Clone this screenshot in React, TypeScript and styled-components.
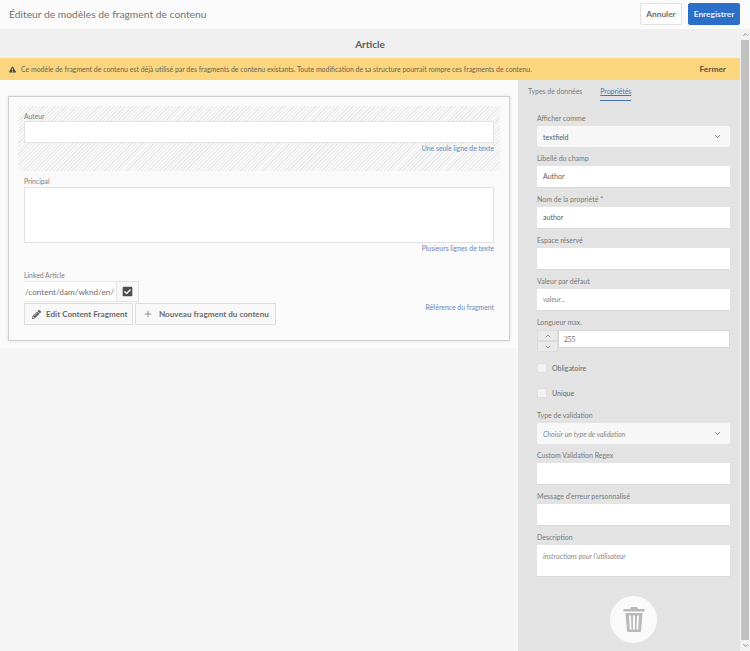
import React from 'react';
import styled, { createGlobalStyle } from 'styled-components';
import { ChevronDown, ChevronUp, Plus } from 'lucide-react';
import { FaCheckSquare, FaExclamationTriangle, FaPencilAlt } from 'react-icons/fa';

const GlobalStyle = createGlobalStyle`
  html, body {
    margin: 0;
    padding: 0;
    height: 100%;
    overflow: hidden;
    background: #f5f5f5;
    font-family: 'Lato', 'Open Sans', sans-serif;
    color: #6e6e6e;
  }
  * {
    box-sizing: border-box;
  }
`;

const Page = styled.div`
  display: flex;
  flex-direction: column;
  width: 750px;
  height: 651px;
  overflow: hidden;
`;

const TopBar = styled.header`
  display: flex;
  align-items: center;
  justify-content: space-between;
  height: 29px;
  flex-shrink: 0;
  padding: 0 10px 1px 9px;
  background: #fafafa;
`;

const Title = styled.div`
  font-size: 10.3px;
  color: #747474;
`;

const Actions = styled.div`
  display: flex;
  gap: 6px;
`;

const ActionButton = styled.button<{ $primary?: boolean }>`
  height: 22px;
  width: ${(p) => (p.$primary ? '52px' : '42px')};
  padding: 0;
  font-family: inherit;
  font-size: 8.3px;
  font-weight: 700;
  border-radius: 2px;
  border: 1px solid ${(p) => (p.$primary ? '#2b6fc9' : '#e1e1e1')};
  background: ${(p) => (p.$primary ? '#2b6fc9' : '#fdfdfd')};
  color: ${(p) => (p.$primary ? '#e8f0fb' : '#6e6e6e')};
`;

const Body = styled.div`
  display: flex;
  flex: 1;
  min-height: 0;
`;

const Workspace = styled.div`
  display: flex;
  flex-direction: column;
  width: 740px;
  flex-shrink: 0;
`;

const Scrollbar = styled.div`
  display: flex;
  flex-direction: column;
  align-items: center;
  flex: 1;
  background: #f1f1f1;
`;

const ScrollArrow = styled.div`
  display: flex;
  align-items: center;
  justify-content: center;
  height: 11px;
  flex-shrink: 0;
  color: #777;
`;

const ScrollThumb = styled.div`
  flex: 1;
  width: 8px;
  background: #c1c1c1;
`;

const ArticleBar = styled.div`
  display: flex;
  align-items: center;
  justify-content: center;
  height: 29px;
  flex-shrink: 0;
  background: #f0f0f0;
  font-size: 10px;
  font-weight: 700;
  color: #5c5c5c;
`;

const Alert = styled.div`
  display: flex;
  align-items: center;
  height: 22px;
  flex-shrink: 0;
  padding: 0 14px 0 9px;
  background: #fcd57f;
  font-size: 6.93px;
  color: #6a6350;
  svg {
    width: 7px;
    height: 7px;
    color: #4a4a4a;
    margin-right: 5px;
  }
`;

const AlertText = styled.span`
  flex: 1;
`;

const AlertClose = styled.span`
  font-size: 8.4px;
  font-weight: 700;
  color: #5a5340;
`;

const Columns = styled.div`
  display: flex;
  flex: 1;
  min-height: 0;
`;

const LeftPane = styled.main`
  width: 518px;
  flex-shrink: 0;
  background: #f5f5f5;
`;

const Canvas = styled.section`
  height: 268px;
  padding: 16px 8px 0;
  background: #fafafa;
`;

const Card = styled.div`
  height: 245px;
  width: 502px;
  padding: 9px 9px 0;
  border: 1px solid #d0d0d0;
  background: #fafafa;
  box-shadow: 0 0 3px rgba(0, 0, 0, 0.12);
`;

const Slot = styled.div<{ $hatched?: boolean; $height: number }>`
  height: ${(p) => p.$height}px;
  padding: 0 6px;
  background: ${(p) =>
    p.$hatched
      ? 'repeating-linear-gradient(135deg, #ebebeb 0, #ebebeb 1px, #f8f8f8 1px, #f8f8f8 2.6px)'
      : 'transparent'};
`;

const SmallLabel = styled.div`
  height: 16px;
  padding-top: 6px;
  font-size: 6.8px;
  line-height: 9px;
  color: #808080;
`;

const AuteurLabel = styled(SmallLabel)`
  height: 15px;
`;

const WideInput = styled.div<{ $height: number }>`
  height: ${(p) => p.$height}px;
  background: #fff;
  border: 1px solid #e2e2e2;
`;

const TypeHint = styled.div`
  height: 11px;
  line-height: 11px;
  text-align: right;
  font-size: 6.85px;
  color: #6f88b8;
`;

const LinkedLabel = styled(SmallLabel)`
  margin-top: 11px;
`;

const LinkedRow = styled.div`
  display: flex;
  height: 21px;
`;

const LinkedValue = styled.div`
  width: 92px;
  height: 21px;
  line-height: 21px;
  font-size: 8.2px;
  white-space: nowrap;
  color: #6e6e6e;
  background: #fff;
  border: 1px solid #e8e8e8;
  border-width: 1px 0;
  padding-left: 1px;
`;

const CheckButton = styled.div`
  display: flex;
  align-items: center;
  justify-content: center;
  width: 23px;
  height: 21px;
  background: #f8f8f8;
  border: 1px solid #e2e2e2;
  color: #4e4e4e;
  svg {
    width: 11px;
    height: 11px;
  }
`;

const FragmentRow = styled.div`
  position: relative;
  display: flex;
  gap: 2px;
  margin-top: 1px;
`;

const FragmentButton = styled.div<{ $width: number; $gap: number }>`
  display: flex;
  align-items: center;
  gap: ${(p) => p.$gap}px;
  height: 22px;
  width: ${(p) => p.$width}px;
  padding-left: 7px;
  font-size: 8.1px;
  font-weight: 700;
  white-space: nowrap;
  color: #6a6a6a;
  background: #f8f8f8;
  border: 1px solid #dedede;
  svg {
    flex-shrink: 0;
    color: #5c5c5c;
  }
`;

const FragmentHint = styled(TypeHint)`
  position: absolute;
  right: 0;
  top: -1px;
`;

const RightPane = styled.aside`
  flex: 1;
  display: flex;
  flex-direction: column;
  background: #e3e3e3;
  padding: 0 10px 0 19px;
`;

const Tabs = styled.nav`
  display: flex;
  gap: 18px;
  height: 28px;
  margin-left: -9px;
`;

const Tab = styled.div<{ $active?: boolean }>`
  height: 21px;
  padding-top: 6px;
  font-size: 6.9px;
  line-height: 10px;
  color: ${(p) => (p.$active ? '#4b72b8' : '#7a7a7a')};
  border-bottom: ${(p) => (p.$active ? '1px solid #4b72b8' : 'none')};
  text-decoration: ${(p) => (p.$active ? 'underline' : 'none')};
`;

const Field = styled.div`
  margin-bottom: 1px;
`;

const FieldLabel = styled.div`
  height: 18px;
  line-height: 20px;
  font-size: 7px;
  color: #777;
`;

const TextBox = styled.div<{ $height?: number; $italic?: boolean }>`
  height: ${(p) => p.$height ?? 22}px;
  line-height: ${(p) => (p.$height ? '22px' : '21px')};
  padding-left: 6px;
  font-size: 7px;
  font-style: ${(p) => (p.$italic ? 'italic' : 'normal')};
  color: ${(p) => (p.$italic ? '#888' : '#606060')};
  background: #fff;
  border-bottom: 1px solid #d9d9d9;
`;

const SelectBox = styled.div<{ $italic?: boolean }>`
  display: flex;
  align-items: center;
  justify-content: space-between;
  height: 21px;
  padding: 0 8px 0 6px;
  font-size: 7px;
  font-style: ${(p) => (p.$italic ? 'italic' : 'normal')};
  color: ${(p) => (p.$italic ? '#888' : '#606060')};
  background: #f7f7f7;
  border-radius: 2px;
  svg {
    color: #555;
  }
`;

const Stepper = styled.div`
  display: flex;
  align-items: flex-start;
  height: 24px;
`;

const StepperButtons = styled.div`
  display: flex;
  flex-direction: column;
  width: 21px;
  flex-shrink: 0;
`;

const StepperButton = styled.div`
  display: flex;
  align-items: center;
  justify-content: center;
  height: 11px;
  background: #eaeaea;
  border: 1px solid #dcdcdc;
  color: #666;
`;

const StepperValue = styled.div`
  flex: 1;
  height: 18px;
  line-height: 18px;
  padding-left: 5px;
  font-size: 7.6px;
  font-family: 'Liberation Serif', serif;
  color: #666;
  background: #fff;
  border: 1px solid #d6d6d6;
`;

const CheckRow = styled.div`
  display: flex;
  align-items: center;
  gap: 5px;
  height: 25px;
  font-size: 7px;
  color: #666;
`;

const CheckBox = styled.span`
  width: 10px;
  height: 10px;
  background: #f2f2f2;
  border: 1px solid #dedede;
`;

const TrashRow = styled.div`
  display: flex;
  justify-content: center;
  margin-top: 18px;
`;

const TrashButton = styled.div`
  display: flex;
  align-items: center;
  justify-content: center;
  width: 47px;
  height: 47px;
  border-radius: 50%;
  background: #fafafa;
`;

const TrashIcon = () => (
  <svg width="22" height="25" viewBox="0 0 22 25" fill="#b9b9b9">
    <path d="M8 0h6l1 2h6.5v2.5H.5V2H7z" />
    <path d="M2.5 6h17l-1.5 18a1 1 0 0 1-1 1H5a1 1 0 0 1-1-1zM6 8.5l.7 14h1.8L8 8.5zm4 0v14h2v-14zm4 0l-.5 14h1.8l.7-14z" fillRule="evenodd" />
  </svg>
);

const App = () => {
  return (
    <Page>
      <GlobalStyle />
      <TopBar>
        <Title>Éditeur de modèles de fragment de contenu</Title>
        <Actions>
          <ActionButton>Annuler</ActionButton>
          <ActionButton $primary>Enregistrer</ActionButton>
        </Actions>
      </TopBar>
      <Body>
        <Workspace>
          <ArticleBar>Article</ArticleBar>
          <Alert>
            <FaExclamationTriangle />
            <AlertText>
              Ce modèle de fragment de contenu est déjà utilisé par des fragments de contenu existants. Toute
              modification de sa structure pourrait rompre ces fragments de contenu.
            </AlertText>
            <AlertClose>Fermer</AlertClose>
          </Alert>
          <Columns>
            <LeftPane>
              <Canvas>
                <Card>
                  <Slot $hatched $height={65}>
                    <AuteurLabel>Auteur</AuteurLabel>
                    <WideInput $height={22} />
                    <TypeHint>Une seule ligne de texte</TypeHint>
                  </Slot>
                  <Slot $height={83}>
                    <SmallLabel>Principal</SmallLabel>
                    <WideInput $height={56} />
                    <TypeHint>Plusieurs lignes de texte</TypeHint>
                  </Slot>
                  <Slot $height={70}>
                    <LinkedLabel>Linked Article</LinkedLabel>
                    <LinkedRow>
                      <LinkedValue>/content/dam/wknd/en/</LinkedValue>
                      <CheckButton>
                        <FaCheckSquare />
                      </CheckButton>
                    </LinkedRow>
                    <FragmentRow>
                      <FragmentButton $width={109} $gap={5}>
                        <FaPencilAlt size={9} />
                        Edit Content Fragment
                      </FragmentButton>
                      <FragmentButton $width={141} $gap={6}>
                        <Plus size={10} strokeWidth={1.5} />
                        Nouveau fragment du contenu
                      </FragmentButton>
                      <FragmentHint>Référence du fragment</FragmentHint>
                    </FragmentRow>
                  </Slot>
                </Card>
              </Canvas>
            </LeftPane>
            <RightPane>
              <Tabs>
                <Tab>Types de données</Tab>
                <Tab $active>Propriétés</Tab>
              </Tabs>
              <Field>
                <FieldLabel>Afficher comme</FieldLabel>
                <SelectBox>
                  textfield
                  <ChevronDown size={9} strokeWidth={2} />
                </SelectBox>
              </Field>
              <Field>
                <FieldLabel>Libellé du champ</FieldLabel>
                <TextBox>Author</TextBox>
              </Field>
              <Field>
                <FieldLabel>Nom de la propriété *</FieldLabel>
                <TextBox>author</TextBox>
              </Field>
              <Field>
                <FieldLabel>Espace réservé</FieldLabel>
                <TextBox />
              </Field>
              <Field>
                <FieldLabel>Valeur par défaut</FieldLabel>
                <TextBox $italic>valeur...</TextBox>
              </Field>
              <Field>
                <FieldLabel>Longueur max.</FieldLabel>
                <Stepper>
                  <StepperButtons>
                    <StepperButton>
                      <ChevronUp size={8} />
                    </StepperButton>
                    <StepperButton>
                      <ChevronDown size={8} />
                    </StepperButton>
                  </StepperButtons>
                  <StepperValue>255</StepperValue>
                </Stepper>
              </Field>
              <CheckRow>
                <CheckBox />
                Obligatoire
              </CheckRow>
              <CheckRow>
                <CheckBox />
                Unique
              </CheckRow>
              <Field>
                <FieldLabel>Type de validation</FieldLabel>
                <SelectBox $italic>
                  Choisir un type de validation
                  <ChevronDown size={9} strokeWidth={2} />
                </SelectBox>
              </Field>
              <Field>
                <FieldLabel>Custom Validation Regex</FieldLabel>
                <TextBox />
              </Field>
              <Field>
                <FieldLabel>Message d'erreur personnalisé</FieldLabel>
                <TextBox />
              </Field>
              <Field>
                <FieldLabel>Description</FieldLabel>
                <TextBox $italic $height={32}>
                  instructions pour l'utilisateur
                </TextBox>
              </Field>
              <TrashRow>
                <TrashButton>
                  <TrashIcon />
                </TrashButton>
              </TrashRow>
            </RightPane>
          </Columns>
        </Workspace>
        <Scrollbar>
          <ScrollArrow>
            <ChevronUp size={7} strokeWidth={3} />
          </ScrollArrow>
          <ScrollThumb />
          <ScrollArrow>
            <ChevronDown size={7} strokeWidth={3} />
          </ScrollArrow>
        </Scrollbar>
      </Body>
    </Page>
  );
};

export default App;
